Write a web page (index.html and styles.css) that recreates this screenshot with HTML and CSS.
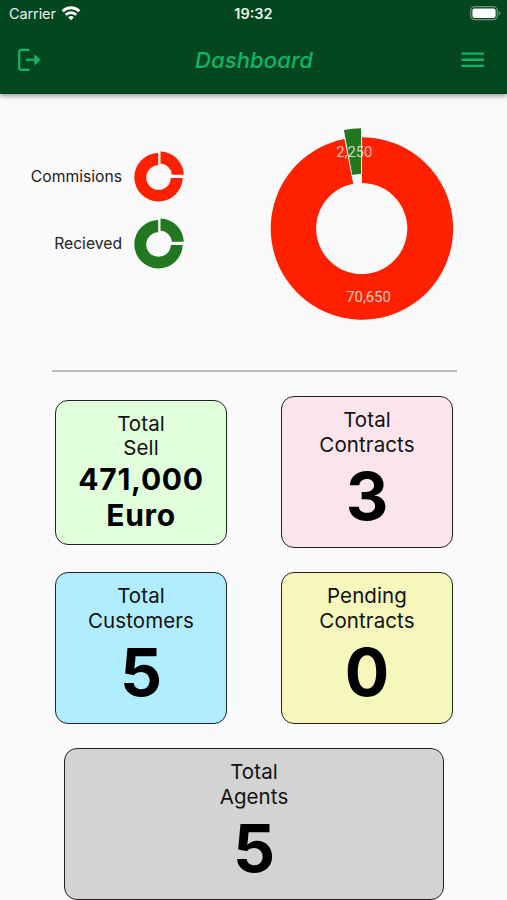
FILE: index.html
```html
<!DOCTYPE html>
<html lang="en">
<head>
  <meta charset="UTF-8">
  <title>Dashboard</title>
  <link rel="stylesheet" href="styles.css">
</head>
<body>
  <header class="header">
    <div class="status-bar">
      <div class="carrier">
        <span>Carrier</span>
        <svg width="20" height="15" viewBox="0 0 20 15" fill="none" stroke="#fff" stroke-width="2.8">
          <path d="M1.6 5.2a12 12 0 0 1 16.8 0"/>
          <path d="M4.7 8.8a7.5 7.5 0 0 1 10.6 0"/>
          <path d="M10 14.2l-2.8-2.9a4 4 0 0 1 5.6 0z" fill="#fff" stroke="none"/>
        </svg>
      </div>
      <span class="time">19:32</span>
      <svg class="battery" width="31" height="15" viewBox="0 0 31 15">
        <rect x="0.7" y="0.7" width="26.6" height="13" rx="4" fill="none" stroke="#719580" stroke-width="1.2"/>
        <rect x="2.4" y="2.5" width="23.2" height="9.4" rx="2.2" fill="#fff"/>
        <path d="M28.7 4.9a2.5 2.5 0 0 1 0 4.6z" fill="#719580"/>
      </svg>
    </div>
    <nav class="nav">
      <svg width="24" height="24" viewBox="0 0 24 24" fill="none" stroke="#10b566" stroke-width="2.2">
        <path d="M12.3 1.8H4.2Q2.2 1.8 2.2 3.8v16q0 2 2 2h8.1" stroke-linejoin="round"/>
        <path d="M8.7 11.8h11"/>
        <path d="M17.3 6.9l1.2 0 5 4.9-5 4.9h-1.2z" fill="#10b566" stroke="none"/>
      </svg>
      <h1 class="title">Dashboard</h1>
      <svg width="24" height="24" viewBox="0 0 24 24" stroke="#10b566" stroke-width="2.4">
        <path d="M.6 5.6h22.4M.6 11.8h22.4M.6 17.9h22.4"/>
      </svg>
    </nav>
  </header>

  <section class="charts">
    <ul class="legend">
      <li class="legend-item">
        <span>Commisions</span>
        <svg class="red" width="52" height="52" viewBox="-26 -26 52 52">
          <path d="M-.8 -23.9A24.2 24.2 0 1 0 23.7 .9H11.8A12.3 12.3 0 1 1 -.8 -11.8z"/>
          <path d="M1.5 -25.4A24 24 0 0 1 24.8 -2.2H12.8A12 12 0 0 0 1.5 -13.4z"/>
        </svg>
      </li>
      <li class="legend-item">
        <span>Recieved</span>
        <svg class="green" width="52" height="52" viewBox="-26 -26 52 52">
          <path d="M-.8 -23.9A24.2 24.2 0 1 0 23.7 .9H11.8A12.3 12.3 0 1 1 -.8 -11.8z"/>
          <path d="M1.5 -25.4A24 24 0 0 1 24.8 -2.2H12.8A12 12 0 0 0 1.5 -13.4z"/>
        </svg>
      </li>
    </ul>
    <svg class="donut" width="184" height="194" viewBox="-92 -101.5 184 194">
      <path class="red" d="M0 -91.2A91.2 91.2 0 1 1 -17.6 -89.5L-8.8 -44.8A45.6 45.6 0 1 0 0 -45.6z"/>
      <path class="green" d="M-.9 -100.2A91.2 91.2 0 0 0 -18.1 -98.5L-9.7 -53.5A45.6 45.6 0 0 1 -.9 -54.5z"/>
      <text x="-7.7" y="-71.6">2,250</text>
      <text x="6.5" y="73">70,650</text>
    </svg>
  </section>

  <hr class="divider">

  <main class="cards">
    <div class="card sell">
      <p class="label">Total<br>Sell</p>
      <p class="amount">471,000<br>Euro</p>
    </div>
    <div class="card contracts">
      <p class="label">Total<br>Contracts</p>
      <p class="count">3</p>
    </div>
    <div class="card customers">
      <p class="label">Total<br>Customers</p>
      <p class="count">5</p>
    </div>
    <div class="card pending">
      <p class="label">Pending<br>Contracts</p>
      <p class="count">0</p>
    </div>
    <div class="card agents">
      <p class="label">Total<br>Agents</p>
      <p class="count">5</p>
    </div>
  </main>
</body>
</html>
```
FILE: styles.css
```css
* {
  box-sizing: border-box;
}
body {
  margin: 0;
  height: 900px;
  overflow: hidden;
  background: #fafafa;
  font-family: Inter, "Liberation Sans", sans-serif;
  color: #000;
}
p, h1, ul {
  margin: 0;
  padding: 0;
}
svg {
  display: block;
}
.header {
  height: 94px;
  background: #02471f;
  box-shadow: 0 2px 5px rgba(0, 0, 0, 0.4);
}
.status-bar {
  display: grid;
  grid-template-columns: 1fr auto 1fr;
  align-items: center;
  height: 27px;
  padding: 0 6px 0 9px;
  color: #e9f3ea;
  font-size: 14.5px;
}
.carrier {
  display: flex;
  align-items: center;
  gap: 5px;
  letter-spacing: -0.1px;
}
.time {
  margin-right: 3px;
  font-weight: 600;
}
.battery {
  justify-self: end;
}
.nav {
  display: flex;
  align-items: center;
  justify-content: space-between;
  height: 66px;
  padding: 0 22px 0 17px;
}
.title {
  padding-left: 6px;
  color: #10b566;
  font-size: 22px;
  font-style: italic;
  font-weight: 500;
  letter-spacing: 0.15px;
}
.charts {
  display: flex;
  justify-content: space-between;
  height: 276px;
  padding: 33px 53px 0 30px;
}
.legend {
  width: 155px;
  margin-top: 24px;
  list-style: none;
}
.legend-item {
  display: flex;
  align-items: center;
  justify-content: flex-end;
  gap: 11px;
  height: 52px;
  margin-bottom: 15px;
  color: #222;
  font-size: 15.7px;
}
.legend-item span {
  padding-bottom: 2px;
}
.red {
  fill: #ff2000;
}
.green {
  fill: #217821;
}
.donut text {
  fill: #fff;
  fill-opacity: 0.75;
  font-family: Roboto, sans-serif;
  font-size: 14.8px;
  text-anchor: middle;
}
.divider {
  width: 405px;
  height: 2px;
  margin: 0 0 0 52px;
  border: 0;
  background: #bbb;
}
.cards {
  display: grid;
  grid-template-columns: 172px 172px;
  grid-auto-rows: 152px;
  gap: 24px 54px;
  justify-content: center;
  align-items: center;
  padding: 24px 0 0 1px;
}
.card {
  height: 152px;
  padding-top: 11px;
  border: 1.5px solid #222;
  border-radius: 13px;
  text-align: center;
}
.label {
  color: #111;
  font-size: 20.5px;
  line-height: 24.5px;
  letter-spacing: 0.1px;
}
.amount {
  font-size: 30px;
  font-weight: 700;
  line-height: 36.5px;
  letter-spacing: 0.7px;
}
.count {
  font-size: 66px;
  font-weight: 700;
  line-height: 79px;
}
.sell {
  height: 145px;
  background: #e1ffda;
}
.contracts {
  background: #fbe5ed;
}
.customers {
  background: #b0edff;
}
.pending {
  background: #f5f8ba;
}
.agents {
  grid-column: 1 / 3;
  justify-self: center;
  width: 380px;
  background: #d3d3d3;
}
```
